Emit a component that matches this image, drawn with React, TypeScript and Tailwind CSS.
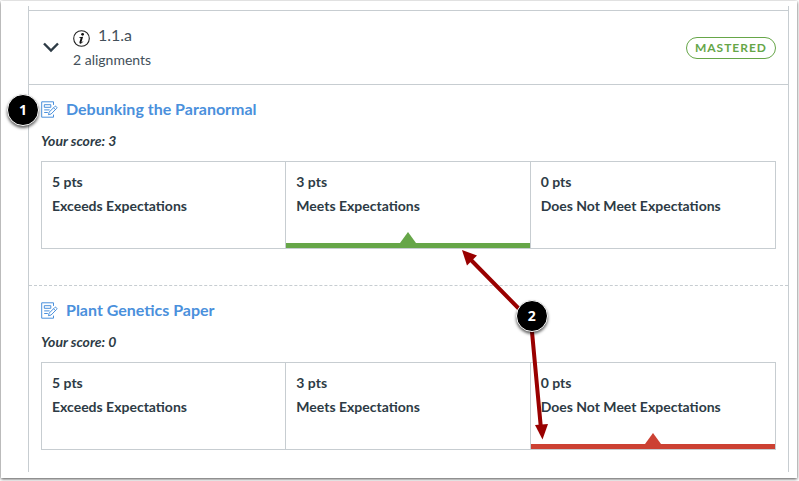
import clsx from "clsx";

type Tone = "green" | "red";

type Alignment = {
  title: string;
  score: number;
  selected: number;
  tone: Tone;
};

const ratings = [
  { points: 5, label: "Exceeds Expectations" },
  { points: 3, label: "Meets Expectations" },
  { points: 0, label: "Does Not Meet Expectations" },
];

const alignments: Alignment[] = [
  { title: "Debunking the Paranormal", score: 3, selected: 1, tone: "green" },
  { title: "Plant Genetics Paper", score: 0, selected: 2, tone: "red" },
];

function ChevronIcon() {
  return (
    <svg viewBox="0 0 16 11" className="h-[11px] w-4" fill="none" aria-hidden="true">
      <path d="M1 1.5 8 8.5 15 1.5" stroke="#2d3b45" strokeWidth="2.4" />
    </svg>
  );
}

function InfoIcon() {
  return (
    <svg viewBox="0 0 17 17" className="h-[17px] w-[17px]" aria-hidden="true">
      <circle cx="8.5" cy="8.5" r="7.8" fill="#fff" stroke="#222" strokeWidth="1.1" />
      <circle cx="9.6" cy="4.3" r="1.4" fill="#111" />
      <path
        d="M6.2 7.2 10.1 6.7 8.5 12.1Q8.4 12.7 9 12.3L10 11.3 10.4 11.6Q8.8 13.9 7.2 13.7 6.1 13.4 6.5 12L7.6 8.2Q7.7 7.7 6.2 7.7Z"
        fill="#111"
      />
    </svg>
  );
}

function AssignmentIcon() {
  return (
    <svg
      viewBox="0 0 17 17"
      className="h-[17px] w-[17px] shrink-0"
      fill="none"
      stroke="#4a90dc"
      aria-hidden="true"
    >
      <path d="M12.5 3.9V.8H.7V16.2H12.5V13.6" />
      <path d="M3.3 3.7H9.8V6.3H3.3ZM3.2 8.9H8.6M3.2 11.5H6.8" />
      <path d="M8.2 11.1 13.9 5.4Q14.6 4.9 15.3 5.6 16.4 6.5 15.7 7.3L10.1 13 7.4 13.7ZM12.6 6.8 14.4 8.6" />
    </svg>
  );
}

function Marker({ label, className }: { label: string; className?: string }) {
  return (
    <span
      className={clsx(
        "absolute flex h-8 w-8 items-center justify-center rounded-full border border-white bg-black font-['Open_Sans',sans-serif] text-sm font-bold text-white shadow-[0_2px_3px_rgba(0,0,0,0.6)]",
        className,
      )}
    >
      {label}
    </span>
  );
}

function Ratings({ selected, tone }: { selected: number; tone: Tone }) {
  return (
    <ul className="grid grid-cols-3 divide-x divide-[#c7cdd1] border border-[#c7cdd1]">
      {ratings.map((rating, i) => (
        <li key={rating.label} className="flex h-[86px] flex-col justify-between pt-2">
          <div className="px-2.5 text-sm leading-6 font-bold">
            <p>{rating.points} pts</p>
            <p>{rating.label}</p>
          </div>
          {i === selected && (
            <div className={tone === "green" ? "text-[#66a648]" : "text-[#cc4133]"}>
              <svg viewBox="0 0 16 11" className="mx-auto h-[11px] w-4" fill="currentColor" aria-hidden="true">
                <path d="M8 0 16 11H0Z" />
              </svg>
              <div className="h-[5px] bg-current" />
            </div>
          )}
        </li>
      ))}
    </ul>
  );
}

function AlignmentItem({ title, score, selected, tone }: Alignment) {
  return (
    <section className="flex flex-col gap-2 border-t border-dashed border-[#c7cdd1] px-3 pt-3 pb-9 first:border-solid last:pb-[22px]">
      <h2 className="flex items-center gap-2 leading-6 font-bold text-[#4a90dc]">
        <AssignmentIcon />
        <a href="#">{title}</a>
      </h2>
      <p className="text-sm leading-6 font-bold italic">Your score: {score}</p>
      <Ratings selected={selected} tone={tone} />
    </section>
  );
}

function Callouts() {
  return (
    <>
      <Marker label="1" className="top-[93px] left-1.5" />
      <div className="pointer-events-none absolute top-[248px] left-2/3 -ml-[72px]">
        <svg viewBox="0 0 90 194" className="h-[194px] w-[90px]" fill="#990000" aria-hidden="true">
          <path d="M70 71 11 11M71 72 81 180" stroke="#990000" strokeWidth="4" />
          <path d="M2 1 17 6.5 7 16.5Z" />
          <path d="M75 176 88 175 82.5 190.5Z" />
        </svg>
        <Marker label="2" className="top-[51px] left-14" />
      </div>
    </>
  );
}

export default function App() {
  return (
    <div className="bg-white p-px pb-2 font-[Lato,sans-serif] text-[#2d3b45]">
      <main className="relative mr-px bg-white pt-[5px] pr-2 pb-1.5 pl-[27px] shadow-[0_1px_3px_rgba(0,0,0,0.7)]">
        <div className="border-x border-[#c7cdd1] pt-1">
          <header className="flex items-center border-t border-[#c7cdd1] py-3 pr-3 pl-3.5">
            <button type="button" aria-label="Collapse 1.1.a" aria-expanded="true">
              <ChevronIcon />
            </button>
            <div className="ml-3.5 flex flex-col gap-px text-[#43505a]">
              <h1 className="flex items-end gap-2 leading-6">
                <InfoIcon />
                1.1.a
              </h1>
              <p className="text-sm leading-6">2 alignments</p>
            </div>
            <span className="ml-auto rounded-full border border-[#66a648] px-2 text-xs leading-5 font-bold tracking-[1px] text-[#66a648]">
              MASTERED
            </span>
          </header>
          <div>
            {alignments.map((alignment) => (
              <AlignmentItem key={alignment.title} {...alignment} />
            ))}
          </div>
        </div>
        <Callouts />
      </main>
    </div>
  );
}
